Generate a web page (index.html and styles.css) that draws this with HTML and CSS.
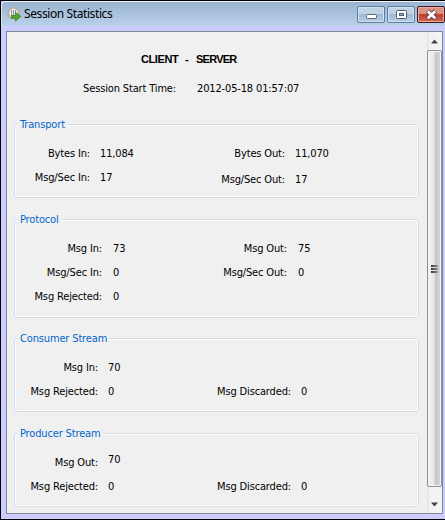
FILE: index.html
```html
<!DOCTYPE html>
<html lang="en">
<head>
<meta charset="utf-8">
<title>Session Statistics</title>
<link rel="stylesheet" href="styles.css">
</head>
<body>
<div class="window">
  <header class="titlebar">
    <svg class="app-icon" width="15" height="15" viewBox="0 0 15 15">
      <circle cx="6.5" cy="6.2" r="5.3" fill="#e9edf0" stroke="#b5a88d" stroke-width="1.4"/>
      <path d="M4.5 3v6M6.5 3v6M8.5 3v3" stroke="#8b9aa7" stroke-width="1"/>
      <path d="M4.5 8.5h4V5.2L13.8 9.5 8.5 14v-2.7h-4z" fill="#55a82f" stroke="#3c7b28" stroke-width=".8"/>
    </svg>
    <h1 class="title">Session Statistics</h1>
    <div class="buttons">
      <span class="btn"><svg width="26" height="15"><rect x="8.5" y="7.5" width="10" height="4" rx="1" fill="#fff" stroke="#5b6675"/></svg></span>
      <span class="btn"><svg width="26" height="15"><rect x="8.5" y="3.5" width="10" height="8" rx="1" fill="#fff" stroke="#505c6b"/><rect x="11.5" y="6.5" width="4" height="2" fill="#9bb5d0" stroke="#505c6b"/></svg></span>
      <span class="btn close"><svg width="26" height="15"><path d="M9.5 4l8 7.5M17.500 4l-8 7.500" stroke="#6c4048" stroke-width="4.600"/><path d="M9.800 4.200l7.400 7M17.200 4.200l-7.400 7" stroke="#fff" stroke-width="2.700"/></svg></span>
    </div>
  </header>
  <div class="frame">
    <main class="content">
      <div class="session"><span class="client">CLIENT</span><span class="dash">-</span><span>SERVER</span></div>
      <div class="start"><span class="label">Session Start Time:</span><span class="stamp">2012-05-18 01:57:07</span></div>
      <section class="group transport">
        <h2 class="legend">Transport</h2>
        <div class="grid">
          <span class="label">Bytes In:</span><span>11,084</span><span class="label">Bytes Out:</span><span>11,070</span>
          <span class="label">Msg/Sec In:</span><span>17</span><span class="label lower">Msg/Sec Out:</span><span class="lower">17</span>
        </div>
      </section>
      <section class="group protocol">
        <h2 class="legend">Protocol</h2>
        <div class="grid">
          <span class="label">Msg In:</span><span>73</span><span class="label">Msg Out:</span><span>75</span>
          <span class="label">Msg/Sec In:</span><span>0</span><span class="label">Msg/Sec Out:</span><span>0</span>
          <span class="label">Msg Rejected:</span><span>0</span>
        </div>
      </section>
      <section class="group stream">
        <h2 class="legend">Consumer Stream</h2>
        <div class="grid">
          <span class="label">Msg In:</span><span>70</span><span></span><span></span>
          <span class="label">Msg Rejected:</span><span>0</span><span class="label">Msg Discarded:</span><span>0</span>
        </div>
      </section>
      <section class="group stream">
        <h2 class="legend">Producer Stream</h2>
        <div class="grid">
          <span class="label">Msg Out:</span><span class="raised">70</span><span></span><span></span>
          <span class="label">Msg Rejected:</span><span>0</span><span class="label">Msg Discarded:</span><span>0</span>
        </div>
      </section>
    </main>
    <div class="scrollbar">
      <svg class="arrow" width="15" height="18"><path d="M4 11.500L7.500 7.500 11 11.500z" fill="#444"/></svg>
      <div class="thumb"><i></i><i></i><i></i></div>
      <svg class="arrow" width="15" height="26"><path d="M4 15.500L7.500 19.500 11 15.500z" fill="#444"/></svg>
    </div>
  </div>
</div>
</body>
</html>
```

FILE: styles.css
```css
* { box-sizing: border-box; }
body { margin: 0; overflow: hidden; }
.window {
  width: 445px; height: 520px;
  display: flex; flex-direction: column;
  background: #ccccff;
  border: solid #000; border-width: 1px 0 1px 1px;
  font: 11px/14px "DejaVu Sans Condensed", "DejaVu Sans", sans-serif;
  font-stretch: condensed;
  letter-spacing: -.15px;
  color: #000;
}
.titlebar {
  height: 25px; flex: none;
  display: flex; align-items: flex-start;
  padding-left: 5px;
  border-top: 1px solid #eef4fa;
  border-left: 1px solid #dce8f5;
  border-top-left-radius: 5px;
  background: linear-gradient(#9ab3d0, #b9d1ea);
}
.app-icon { margin-top: 5px; }
.title { margin: 3px 0 0 2px; flex: 1; font: 12px/18px "Noto Sans", sans-serif; letter-spacing: -.4px; }
.buttons { display: flex; gap: 2px; margin: 4px 0 0 0; }
.btn {
  width: 28px; height: 17px;
  border: 1px solid #5e7c9c; border-radius: 2px;
  box-shadow: inset 0 0 0 1px #d3e2f1;
  background: linear-gradient(#bfd2e6 48%, #9fb9d5 50%, #b6cee7);
}
.btn svg { display: block; }
.close {
  border-color: #43171f;
  box-shadow: inset 0 0 0 1px #e8afa3;
  background: linear-gradient(#dc9384 45%, #bd402b 50%, #ce6650);
}
.frame {
  margin: 5px 2px 5px 5px; flex: 1;
  display: flex;
  border: 1px solid #828790;
  background: #f0f0f0;
}
.content { width: 420px; padding: 19px 0 0 7px; flex: none; }
.session {
  display: flex; padding-left: 127px;
  font: bold 11px/16px "Liberation Sans", sans-serif;
  letter-spacing: -.75px;
}
.client { width: 43px; letter-spacing: -.4px; }
.dash { width: 12px; padding-left: 1px; }
.start { display: flex; margin-top: 15px; line-height: 14px; }
.start .label { width: 162px; }
.stamp { margin-left: 21px; }
.label { text-align: right; }
.group {
  width: 405px; height: 74px; margin-top: 21px;
  border: 1px solid #d5dfe5; border-radius: 3px;
  box-shadow: inset 1px 1px #fff, inset -1px -1px #fff;
}
.transport { margin-top: 28px; }
.protocol { height: 99px; }
.stream { margin-top: 20px; }
.stream + .stream { margin-top: 21px; }
.legend {
  width: max-content; height: 14px;
  margin: -7px 0 0 3px; padding: 0 2px;
  background: #f0f0f0; color: #0066cc;
  font-size: inherit; font-weight: normal;
}
.grid {
  display: grid; margin-top: 10px; column-gap: 10px;
  grid-auto-rows: 24px; line-height: 24px;
  white-space: nowrap;
}
.transport .grid { grid-template-columns: 75px 34px 141px 1fr; }
.protocol .grid { grid-template-columns: 87px 34px 131px 1fr; }
.stream .grid { grid-template-columns: 83px 34px 139px 1fr; }
.protocol .grid span:not(.label) { padding-left: 1px; }
.lower { padding-top: 2px; }
.raised { margin-top: -3px; }
.scrollbar {
  width: 15px; flex: none;
  display: flex; flex-direction: column;
  background: linear-gradient(90deg, #e3e3e3, #f2f2f2 20%, #f4f4f4);
}
.arrow { flex: none; display: block; }
.thumb {
  flex: 1;
  display: flex; flex-direction: column; align-items: center; justify-content: center; gap: 1px;
  border: 1px solid #8f8f8f; border-radius: 2px;
  box-shadow: inset 0 0 0 1px #f5f5f5;
  background: linear-gradient(90deg, #f3f3f3, #e7e7e9 45%, #c5c5ca 60%, #d8d8dc);
}
.thumb i { width: 7px; height: 2px; background: linear-gradient(90deg, #333, #999); }
```
